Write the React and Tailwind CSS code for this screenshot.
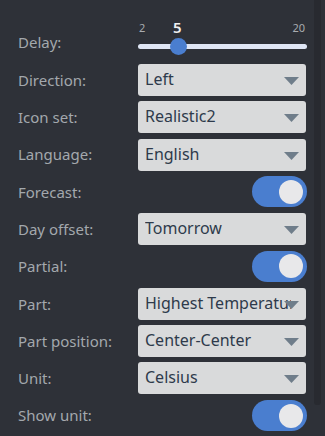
import React from "react";

const font = { fontFamily: "'Noto Sans', 'Open Sans', sans-serif" };

const Arrow = () => (
  <svg
    className="absolute right-[7px] top-[13px]"
    width="15"
    height="8"
    viewBox="0 0 15 8"
  >
    <path d="M0 0 H15 L7.5 8 Z" fill="#6f7d8a" />
  </svg>
);

const Select = ({ value }) => (
  <div className="relative h-[32px] w-[168px] rounded-[3px] bg-[#d9dadb] pl-[7px] pr-[15px]">
    <div className="overflow-hidden whitespace-nowrap pt-[5px] text-[16px] leading-[21px] text-[#2e3a4b]">
      {value}
    </div>
    <Arrow />
  </div>
);

const Toggle = () => (
  <div className="ml-auto mr-[1px] flex h-[31px] w-[55px] items-center justify-end rounded-full bg-[#4a7ecf] pr-[4px]">
    <div className="h-[24px] w-[24px] rounded-full bg-[#e8e8ea]" />
  </div>
);

const Row = ({ label, children }) => (
  <div className="flex h-[32px] items-center">
    <div className="w-[120px] text-[15px] text-[#a3a8ad]">{label}</div>
    <div className="flex w-[170px]">{children}</div>
  </div>
);

export default function App() {
  const rows = [
    ["Direction:", "Left"],
    ["Icon set:", "Realistic2"],
    ["Language:", "English"],
    ["Forecast:", null],
    ["Day offset:", "Tomorrow"],
    ["Partial:", null],
    ["Part:", "Highest Temperature"],
    ["Part position:", "Center-Center"],
    ["Unit:", "Celsius"],
    ["Show unit:", null],
  ];

  return (
    <div className="flex h-[436px] w-[325px] overflow-hidden bg-[#2e3138]" style={font}>
      <div className="w-[314px] pl-[18px] pt-[16px]">
        {/* delay slider */}
        <div className="flex h-[44px]">
          <div className="w-[120px] pt-[15px] text-[15px] text-[#a3a8ad]">Delay:</div>
          <div className="relative h-[44px] w-[170px]">
            <span className="absolute left-[1px] top-[4px] text-[11px] text-[#a8acb0]">2</span>
            <span className="absolute left-[35px] top-[0px] text-[15px] font-semibold text-[#f0f0f0]">5</span>
            <span className="absolute right-[3px] top-[4px] text-[11px] text-[#a8acb0]">20</span>
            <div className="absolute left-0 top-[28px] h-[5px] w-[169px] rounded-full bg-[#dfe6f5]" />
            <div className="absolute left-[32px] top-[22px] h-[17px] w-[17px] rounded-full bg-[#4a7ecf]" />
          </div>
        </div>
        <div className="mt-[4px] flex flex-col gap-[5.3px]">
          {rows.map(([label, value]) => (
            <Row key={label} label={label}>
              {value ? <Select value={value} /> : <Toggle />}
            </Row>
          ))}
        </div>
      </div>
      <div className="w-[11px]">
        <div className="h-[405px] w-[7px] rounded-b-[3px] bg-[#282a30]" />
      </div>
    </div>
  );
}
